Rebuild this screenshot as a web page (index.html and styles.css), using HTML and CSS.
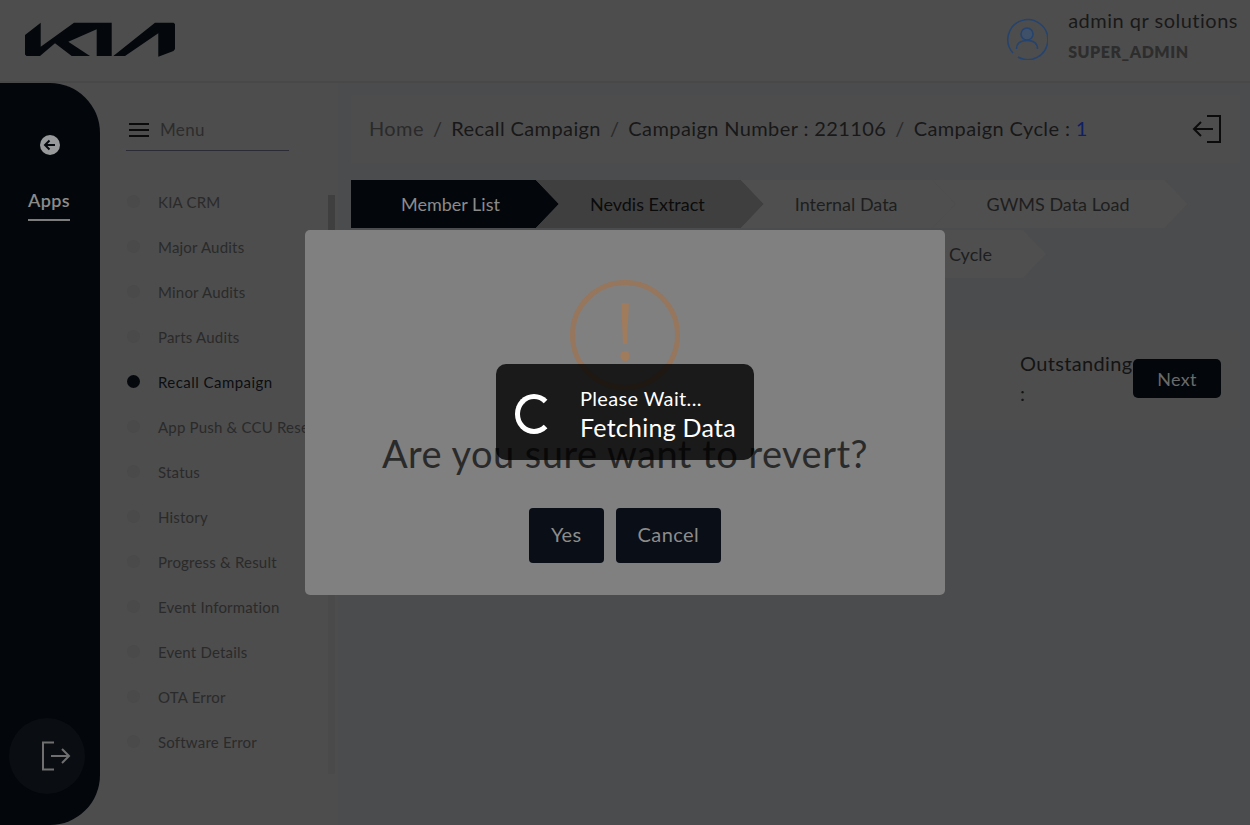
FILE: index.html
```html
<!DOCTYPE html>
<html lang="en">
<head>
<meta charset="utf-8">
<title>Recall Campaign</title>
<link rel="stylesheet" href="styles.css">
</head>
<body>
<div class="app">
  <header class="topbar">
    <svg class="logo" viewBox="0 0 150 35" aria-label="KIA">
      <path d="M0 13L15.7 .7V24.7L49 .7H86.7V34H71.7V7.3L43.3 19.7L65 34H46.7L30 21.3L15 34H1.5L0 32.5Z"/>
      <path d="M88.3 34H100L133.3 11.3V34.7L148.5 29L150 27V2L148.5 .7H130Z"/>
    </svg>
    <div class="user">
      <svg class="user-icon" viewBox="0 0 42 42">
        <path class="ring" d="M7 35A20 20 0 1 1 12 39"/>
        <circle class="head" cx="21" cy="16" r="6"/>
        <path class="ring" d="M10.500 31C10.500 25 15 22.500 21 22.500S31.500 25 31.500 31"/>
      </svg>
      <div class="user-text">
        <div class="user-name">admin qr solutions</div>
        <div class="user-role">SUPER_ADMIN</div>
      </div>
    </div>
  </header>
  <div class="body">
    <aside class="rail">
      <div class="rail-top">
        <svg class="back" viewBox="0 0 20 20">
          <circle cx="10" cy="10" r="10" fill="#97999b"/>
          <path d="M15 10H5.500M9.500 5.500L5 10L9.500 14.500" fill="none" stroke="#05090e" stroke-width="2"/>
        </svg>
        <div class="apps">Apps</div>
      </div>
      <div class="logout">
        <svg class="logout-icon" viewBox="0 0 30 30" width="30" height="30">
          <path d="M13 1.500H2V28.500H13M10 15H28M21 8L28 15L21 22" fill="none" stroke="#6f6f6f" stroke-width="2"/>
        </svg>
      </div>
    </aside>
    <nav class="menu">
      <div class="menu-head">
        <span class="burger"><i></i><i></i><i></i></span>
        <span>Menu</span>
      </div>
      <div class="menu-scroll">
        <ul class="menu-list">
          <li><b></b><span>KIA CRM</span></li>
          <li><b></b><span>Major Audits</span></li>
          <li><b></b><span>Minor Audits</span></li>
          <li><b></b><span>Parts Audits</span></li>
          <li class="active"><b></b><span>Recall Campaign</span></li>
          <li><b></b><span>App Push &amp; CCU Reset</span></li>
          <li><b></b><span>Status</span></li>
          <li><b></b><span>History</span></li>
          <li><b></b><span>Progress &amp; Result</span></li>
          <li><b></b><span>Event Information</span></li>
          <li><b></b><span>Event Details</span></li>
          <li><b></b><span>OTA Error</span></li>
          <li><b></b><span>Software Error</span></li>
        </ul>
        <div class="scrollbar"><div class="thumb"></div></div>
      </div>
    </nav>
    <main class="content">
      <div class="crumbs">
        <div class="crumb-list">
          <span class="home">Home</span><span class="sep">/</span>
          <span>Recall Campaign</span><span class="sep">/</span>
          <span>Campaign Number : 221106</span><span class="sep">/</span>
          <span>Campaign Cycle : <em>1</em></span>
        </div>
        <svg class="exit" viewBox="0 0 30 30" width="30" height="30">
          <path d="M15 2H28V28H15M2 15H21M9 8L2 15L9 22" fill="none" stroke="#0b0b0b" stroke-width="2"/>
        </svg>
      </div>
      <div class="tabs">
        <div class="tab tab-on">Member List</div>
        <div class="tab tab-next">Nevdis Extract</div>
        <div class="tab">Internal Data</div>
        <div class="tab">GWMS Data Load</div>
        <div class="tab tab-last">Cycle</div>
      </div>
      <div class="panel">
        <div class="outstanding">Outstanding :</div>
        <div class="next">Next</div>
      </div>
    </main>
  </div>
</div>
<div class="overlay">
  <div class="dialog">
    <div class="warn"><span>!</span></div>
    <h2 class="question">Are you sure want to revert?</h2>
    <div class="actions">
      <div class="btn">Yes</div>
      <div class="btn">Cancel</div>
    </div>
  </div>
  <div class="loader">
    <div class="spinner"></div>
    <div class="loader-text">
      <div class="wait">Please Wait...</div>
      <div class="fetch">Fetching Data</div>
    </div>
  </div>
</div>
</body>
</html>
```
FILE: styles.css
```css
* { box-sizing: border-box; }
html, body { margin: 0; height: 100%; overflow: hidden; }
body { font-family: Lato, "Noto Sans", sans-serif; letter-spacing: .35px; background: #4d4d4d; color: #161616; }
.app { height: 825px; display: flex; flex-direction: column; }

.topbar { height: 83px; flex: none; display: flex; justify-content: space-between; align-items: center; padding: 0 12px 12px 25px; background: #4d4d4d; border-bottom: 2px solid #484848; }
.logo { width: 150px; height: 35px; fill: #04080c; margin-top: 9px; }
.user { display: flex; align-items: center; gap: 20px; }
.user-icon { width: 42px; height: 42px; margin-top: 9px; }
.ring { fill: none; stroke: #24436f; stroke-width: 1.500; }
.head { fill: #3f5069; stroke: #24436f; stroke-width: 1.500; }
.user-name { font-size: 20px; line-height: 28px; letter-spacing: .5px; color: #191919; }
.user-role { font-size: 16px; line-height: 22px; letter-spacing: .55px; font-weight: 800; color: #2d2d2d; margin-top: 7px; }

.body { flex: 1; display: flex; min-height: 0; }
.rail { width: 100px; flex: none; background: #03070b; border-radius: 0 50px 50px 0; display: flex; flex-direction: column; justify-content: space-between; padding: 52px 0 31px; }
.rail-top { display: flex; flex-direction: column; align-items: center; }
.back { width: 20px; height: 20px; }
.apps { font-size: 18px; line-height: 24px; font-weight: 600; color: #8b8b8b; border-bottom: 2px solid #7c7c7c; padding-bottom: 7px; margin-top: 33px; margin-right: 2px; }
.logout { width: 76px; height: 76px; border-radius: 50%; background: #0a0e13; margin-left: 9px; display: flex; align-items: center; justify-content: flex-start; padding-left: 32px; }
.logout-icon { flex: none; }

.menu { width: 238px; flex: none; padding: 24px 0 0 26px; }
.menu-head { width: 163px; height: 44px; display: flex; align-items: center; gap: 11px; font-size: 17px; color: #2c2c2c; border-bottom: 1px solid #2b2b35; padding: 2px 0 0 3px; }
.burger { width: 20px; display: flex; flex-direction: column; gap: 4px; }
.burger i { height: 2px; background: #0a0a0a; }
.menu-scroll { position: relative; margin-top: 28px; height: 595px; width: 210px; }
.menu-list { list-style: none; margin: 0; padding: 0 0 0 1px; width: 180px; }
.menu-list li { height: 45px; display: flex; align-items: center; gap: 18px; font-size: 15px; letter-spacing: .2px; color: #2a2a2a; white-space: nowrap; }
.menu-list b { width: 13px; height: 13px; flex: none; border-radius: 50%; background: #4a4a4a; }
.menu-list .active { color: #0c0e11; letter-spacing: .45px; }
.menu-list .active b { background: #05090e; }
.scrollbar { position: absolute; right: 1px; top: 16px; bottom: 0; width: 7px; background: #4a4a4a; }
.thumb { height: 300px; background: #3f3f3f; }

.content { flex: 1; min-width: 0; background: #4b4c4e; padding: 12px 10px 0 13px; }
.crumbs { height: 68px; background: #4d4d4e; display: flex; align-items: center; justify-content: space-between; padding: 0 18px 2px 18px; }
.crumb-list { display: flex; align-items: center; font-size: 20px; letter-spacing: .39px; color: #181818; white-space: pre; }
.home { color: #2a2a2a; }
.sep { color: #2a2a2a; margin: 0 9px; }
.crumb-list em { font-style: normal; color: #0f1f66; }
.exit { margin-top: 2px; }
.tabs { display: flex; flex-wrap: wrap; margin-top: 17px; row-gap: 2px; }
.tab { height: 48px; display: flex; align-items: center; padding: 0 58px 0 54px; margin-right: -23px; font-size: 18px; letter-spacing: 0; color: #1e1e1e; background: #4f4f4f; clip-path: polygon(0 0, calc(100% - 23px) 0, 100% 50%, calc(100% - 23px) 100%, 0 100%, 23px 50%); }
.tab-on { background: #03070b; color: #8b8b8b; padding: 0 59px 0 50px; clip-path: polygon(0 0, calc(100% - 23px) 0, 100% 50%, calc(100% - 23px) 100%, 0 100%); }
.tab-next { background: #3f3f3f; color: #0b0b0b; padding-right: 59px; }
.tab-last { width: 695px; justify-content: flex-end; padding-right: 54px; }
.panel { height: 100px; margin-top: 52px; background: #4d4d4e; display: flex; align-items: center; justify-content: flex-end; padding: 0 19px 0 0; }
.outstanding { width: 113px; font-size: 20px; line-height: 30px; padding-bottom: 5px; color: #141414; }
.next { width: 88px; height: 39px; border-radius: 5px; background: #03070b; color: #6a6a6a; font-size: 18px; display: flex; align-items: center; justify-content: center; margin-bottom: 3px; }

.overlay { position: fixed; inset: 0; display: flex; align-items: center; justify-content: center; }
.dialog { width: 640px; height: 365px; background: #808080; border-radius: 5px; padding-top: 50px; display: flex; flex-direction: column; align-items: center; }
.warn { width: 110px; height: 110px; flex: none; border: 5px solid #96765c; border-radius: 50%; display: flex; align-items: center; justify-content: center; }
.warn span { font-family: "Open Sans", sans-serif; font-size: 78px; line-height: 1; font-weight: 400; letter-spacing: 0; color: #a07b5c; margin-top: -10px; }
.question { margin: 39px 0 0; font-size: 38px; line-height: 48px; letter-spacing: .48px; font-weight: 400; color: #2a2a2a; }
.actions { display: flex; gap: 12px; margin-top: 31px; }
.btn { height: 55px; padding: 0 22px 3px; border-radius: 4px; background: #0a0e16; color: #8c8c8c; font-size: 20px; letter-spacing: .4px; display: flex; align-items: center; }
.loader { position: absolute; left: 496px; top: 364px; width: 258px; height: 96px; border-radius: 10px; background: rgba(0, 0, 0, .8); color: #fff; display: flex; align-items: center; gap: 27px; padding: 4px 0 0 19px; }
.spinner { width: 38px; height: 40px; border: 5px solid #fff; border-right-color: transparent; border-radius: 50%; flex: none; }
.wait { font-size: 20px; line-height: 26px; }
.fetch { font-size: 25px; line-height: 32px; letter-spacing: .25px; }
```
